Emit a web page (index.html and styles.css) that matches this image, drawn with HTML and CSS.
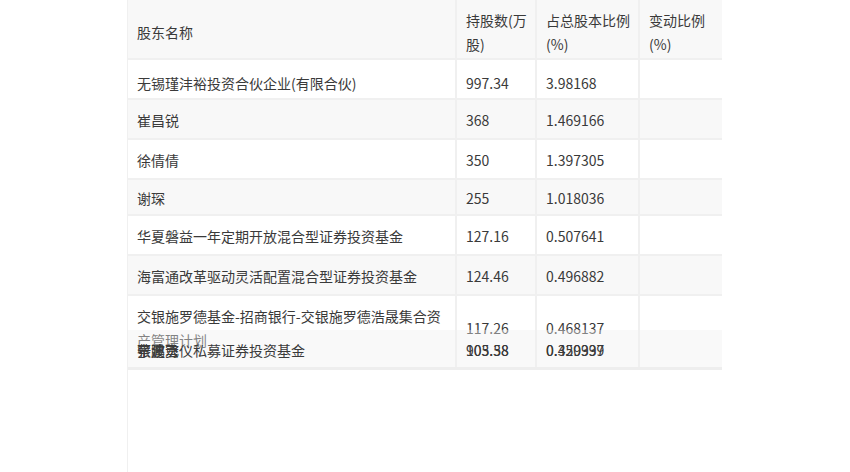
FILE: index.html
```html
<!DOCTYPE html>
<html lang="zh-CN">
<head>
<meta charset="utf-8">
<title>股东</title>
<link rel="stylesheet" href="styles.css">
</head>
<body>
<div class="page">
  <div class="table-wrap">
    <table class="holders">
      <colgroup>
        <col class="c-name"><col class="c-shares"><col class="c-ratio"><col class="c-change">
      </colgroup>
      <thead>
        <tr class="alt">
          <th>股东名称</th>
          <th>持股数(万股)</th>
          <th>占总股本比例(%)</th>
          <th>变动比例(%)</th>
        </tr>
      </thead>
      <tbody>
        <tr class="first"><td>无锡瑾沣裕投资合伙企业(有限合伙)</td><td>997.34</td><td>3.98168</td><td></td></tr>
        <tr class="alt"><td>崔昌锐</td><td>368</td><td>1.469166</td><td></td></tr>
        <tr><td>徐倩倩</td><td>350</td><td>1.397305</td><td></td></tr>
        <tr class="alt short"><td>谢琛</td><td>255</td><td>1.018036</td><td></td></tr>
        <tr><td>华夏磐益一年定期开放混合型证券投资基金</td><td>127.16</td><td>0.507641</td><td></td></tr>
        <tr class="alt"><td>海富通改革驱动灵活配置混合型证券投资基金</td><td>124.46</td><td>0.496882</td><td></td></tr>
        <tr class="last"><td class="name-wide">交银施罗德基金-招商银行-交银施罗德浩晟集合资产管理计划</td><td>117.26</td><td>0.468137</td><td></td></tr>
      </tbody>
    </table>
    <div class="ghost-row">
      <div class="g-cell g-name">
        <span class="g-text">宁波宏仪私募证券投资基金</span>
        <span class="g-text">蔡建勇</span>
        <span class="g-text">张鹏飞</span>
      </div>
      <div class="g-cell g-shares">
        <span class="g-text">105.38</span>
        <span class="g-text">903.58</span>
      </div>
      <div class="g-cell g-ratio">
        <span class="g-text">0.420397</span>
        <span class="g-text">0.359939</span>
      </div>
      <div class="g-cell g-change"></div>
    </div>
  </div>
</div>
</body>
</html>
```

FILE: styles.css
```css
html, body {
  margin: 0;
  padding: 0;
  background: #ffffff;
}

body {
  font-family: "Noto Sans CJK SC", "Noto Sans", sans-serif;
  font-size: 14px;
  color: #3a3a3a;
}

.page {
  margin-left: 127px;
  width: 595px;
  height: 472px;
  border-left: 1px solid #f0f0f0;
  box-sizing: border-box;
  overflow: hidden;
}

.table-wrap {
  position: relative;
  height: 367px;
  border-bottom: 3px solid #eeeeee;
  overflow: hidden;
}

.holders {
  width: 594px;
  table-layout: fixed;
  border-collapse: separate;
  border-spacing: 0;
}

.c-name { width: 329px; }
.c-shares { width: 80px; }
.c-ratio { width: 103px; }
.c-change { width: 82px; }

.holders th,
.holders td {
  text-align: left;
  font-weight: normal;
  line-height: 24px;
  padding: 8px 5px 6px 9px;
  border-right: 2px solid #f0f0f0;
  border-bottom: 2px solid #f0f0f0;
  vertical-align: middle;
  background: #ffffff;
  word-break: break-all;
}

.holders td.name-wide {
  padding-right: 10px;
}

.holders th {
  padding-top: 8px;
  padding-bottom: 2px;
}

.holders th:last-child,
.holders td:last-child {
  border-right: none;
}

.holders tr.alt th,
.holders tr.alt td {
  background: #f8f8f8;
}

.holders tr.first td {
  padding-top: 11px;
  padding-bottom: 3px;
}

.holders tr.short td {
  padding-top: 6px;
  padding-bottom: 4px;
}

.holders tr.last td {
  padding-top: 8px;
  padding-bottom: 10px;
  border-bottom: none;
}

.ghost-row {
  position: absolute;
  left: 0;
  top: 330px;
  width: 594px;
  height: 37px;
  display: grid;
  grid-template-columns: 329px 80px 103px 82px;
  background: rgba(240, 240, 240, 0.4);
}

.g-cell {
  position: relative;
  border-right: 2px solid #f0f0f0;
}

.g-change {
  border-right: none;
}

.g-text {
  position: absolute;
  left: 9px;
  top: 8px;
  line-height: 24px;
  white-space: nowrap;
  color: #3a3a3a;
}
```
